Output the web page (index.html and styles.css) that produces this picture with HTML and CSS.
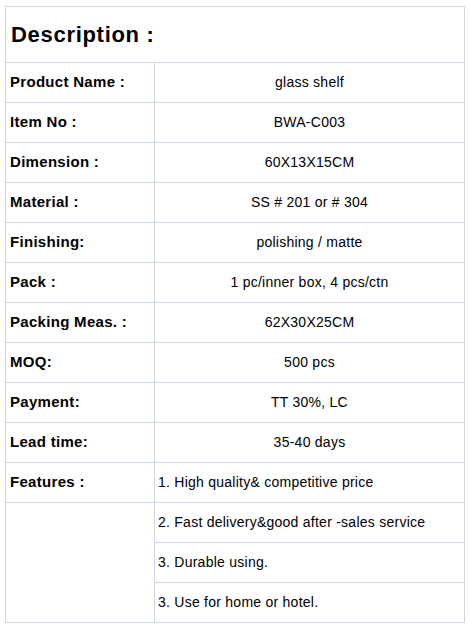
FILE: index.html
```html
<!DOCTYPE html>
<html>
<head>
<meta charset="utf-8">
<link rel="stylesheet" href="styles.css">
</head>
<body>
<div class="wrap">
<table class="spec">
  <colgroup><col class="c1"><col class="c2"></colgroup>
  <tr class="head"><th colspan="2">Description :</th></tr>
  <tr><td class="lbl">Product Name :</td><td class="val">glass shelf</td></tr>
  <tr><td class="lbl">Item No :</td><td class="val">BWA-C003</td></tr>
  <tr><td class="lbl">Dimension :</td><td class="val">60X13X15CM</td></tr>
  <tr><td class="lbl">Material :</td><td class="val">SS # 201 or # 304</td></tr>
  <tr><td class="lbl">Finishing:</td><td class="val">polishing / matte</td></tr>
  <tr><td class="lbl">Pack :</td><td class="val">1 pc/inner box, 4 pcs/ctn</td></tr>
  <tr><td class="lbl">Packing Meas. :</td><td class="val">62X30X25CM</td></tr>
  <tr><td class="lbl">MOQ:</td><td class="val">500 pcs</td></tr>
  <tr><td class="lbl">Payment:</td><td class="val">TT 30%, LC</td></tr>
  <tr><td class="lbl">Lead time:</td><td class="val">35-40 days</td></tr>
  <tr><td class="lbl">Features :</td><td class="feat">1. High quality&amp; competitive price</td></tr>
  <tr><td class="lbl empty" rowspan="3"></td><td class="feat">2. Fast delivery&amp;good after -sales service</td></tr>
  <tr><td class="feat">3. Durable using.</td></tr>
  <tr><td class="feat">3. Use for home or hotel.</td></tr>
</table>
</div>
</body>
</html>
```

FILE: styles.css
```css
html, body {
  margin: 0;
  padding: 0;
  background: #ffffff;
}
.wrap {
  padding: 6px 0 0 5px;
}
.spec {
  border-collapse: collapse;
  table-layout: fixed;
  width: 459px;
  font-family: "Liberation Sans", Arial, sans-serif;
  color: #000000;
}
.c1 { width: 149px; }
.c2 { width: 310px; }
.spec th, .spec td {
  border: 1px solid #cfd7e7;
  padding: 0;
}
.spec .head th {
  height: 55px;
  text-align: left;
  font-size: 22px;
  font-weight: bold;
  letter-spacing: 0.7px;
  padding: 0 0 0 5px;
}
.spec td {
  vertical-align: middle;
}
.spec td.lbl {
  height: 37px;
  font-size: 15px;
  font-weight: bold;
  letter-spacing: 0.3px;
  padding: 0 0 2px 4px;
}
.spec td.val {
  height: 38px;
  text-align: center;
  font-size: 14px;
  letter-spacing: 0.25px;
  padding: 0 0 1px 0;
}
.spec td.feat {
  height: 38px;
  text-align: left;
  font-size: 14px;
  letter-spacing: 0.25px;
  padding: 0 0 1px 3px;
}
```
